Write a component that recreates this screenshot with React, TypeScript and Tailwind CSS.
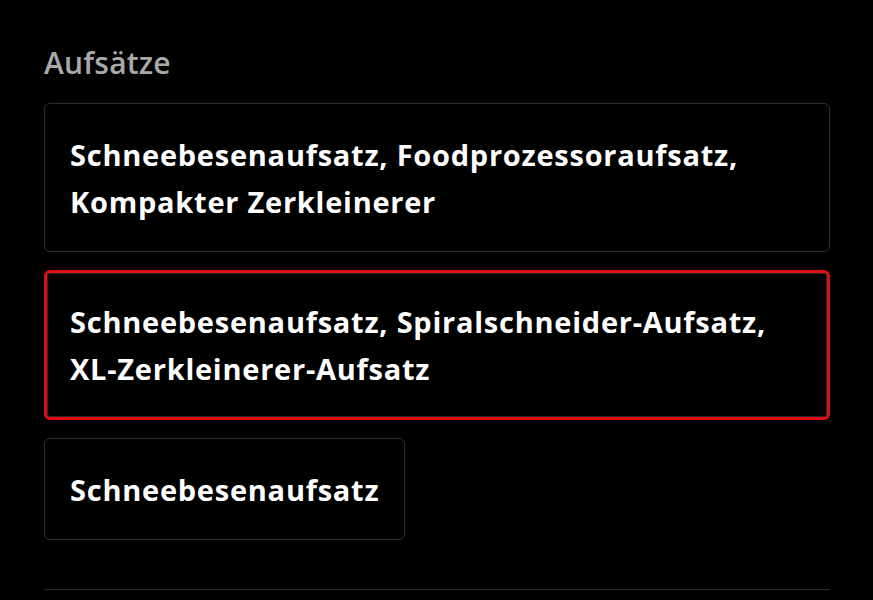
const options = [
  { lines: ["Schneebesenaufsatz, Foodprozessoraufsatz,", "Kompakter Zerkleinerer"], selected: false, full: true },
  { lines: ["Schneebesenaufsatz, Spiralschneider-Aufsatz,", "XL-Zerkleinerer-Aufsatz"], selected: true, full: true },
  { lines: ["Schneebesenaufsatz"], selected: false, full: false },
];

export default function App() {
  return (
    <div className="min-h-[600px] w-[873px] bg-black font-['Open_Sans',sans-serif] px-[44px] pt-[43px] overflow-hidden">
      <h2 className="text-[30px] font-semibold text-[#a9a9a9] leading-[40px] mb-[20px] tracking-[0.2px]">Aufsätze</h2>
      <div className="flex flex-col items-start gap-[18px]">
        {options.map((o) => (
          <button
            key={o.lines[0]}
            className={
              o.selected
                ? "w-[786px] text-left rounded-[6px] border-[3px] border-[#e00d12] px-[23px] py-[25px] shadow-[inset_0_0_0_1px_#2a2a2a]"
                : (o.full ? "w-[786px] " : "") +
                  "text-left rounded-[6px] border border-[#2e2e2e] px-[25px] py-[26.5px]"
            }
          >
            {o.lines.map((l) => (
              <span key={l} className="block text-[29px] font-bold text-white leading-[47px] tracking-[0.75px] whitespace-nowrap">
                {l}
              </span>
            ))}
          </button>
        ))}
      </div>
      <div className="mt-[49px] h-px w-[786px] bg-[#2a2a2a]" />
    </div>
  );
}
